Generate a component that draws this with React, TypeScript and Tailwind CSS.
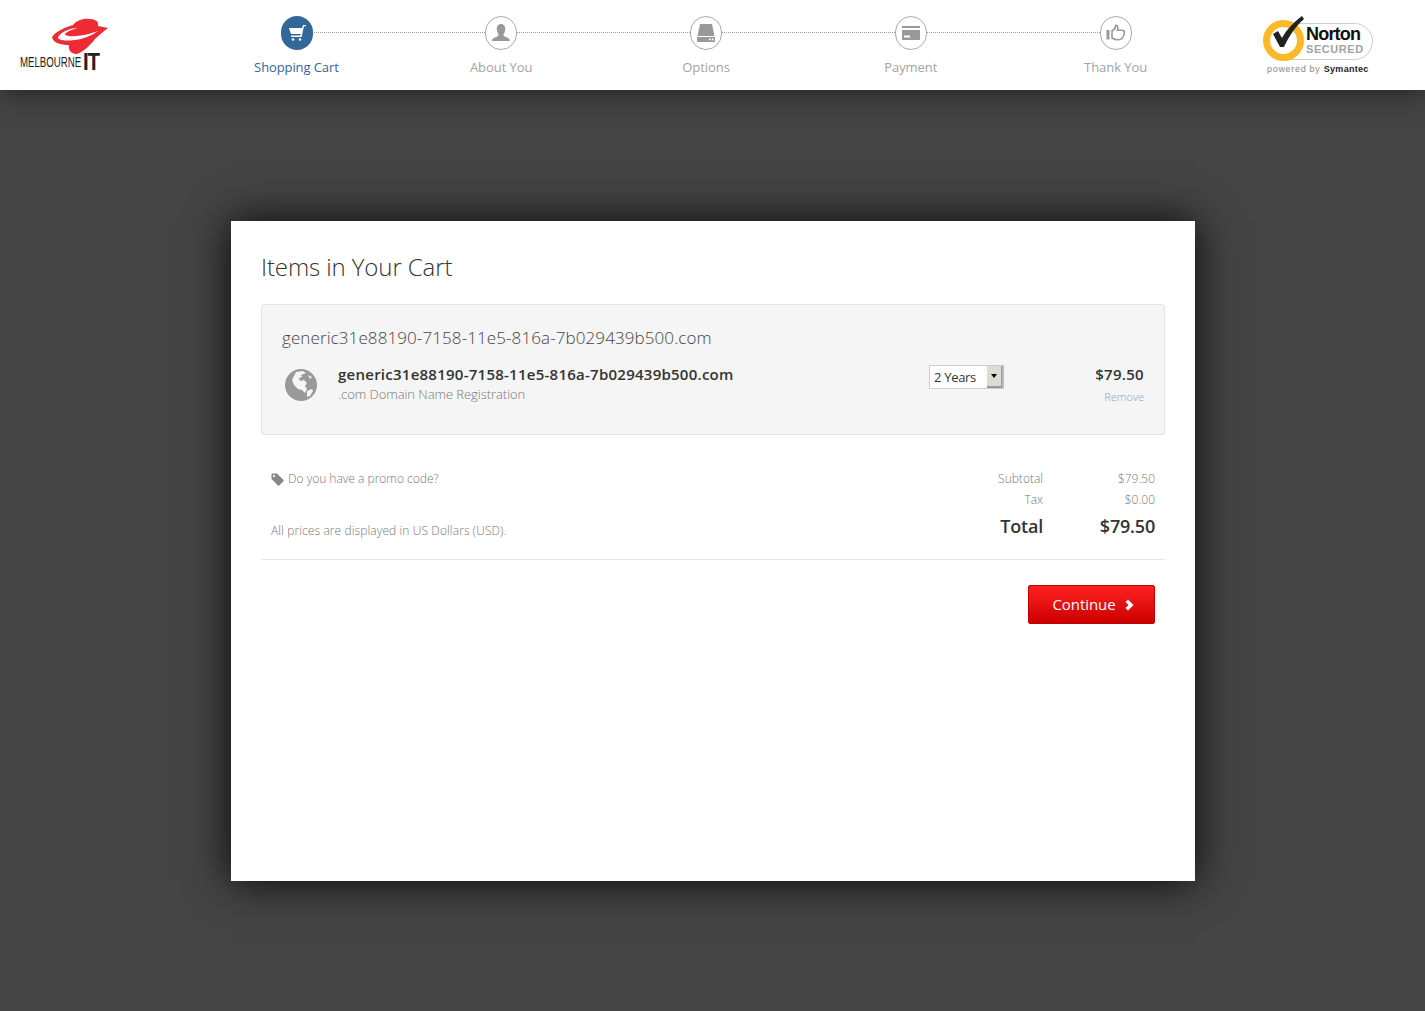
import React from "react";

const Logo = () => (
  <div className="relative w-[100px] h-[60px] ml-[19px] mt-[17px] shrink-0">
    <svg className="absolute left-[32px] top-0" width="60" height="38" viewBox="0 0 60 38">
      <path d="M1 20 C6 13 16 10 22 8 C26 3 33 1 38 2 C44 2 48 4 47 9 L57 11 C52 15 48 18 44 22 C38 30 30 36 26 37 C20 37 17 33 18 28 C10 28 2 26 1 20 Z" fill="#ee2a33" />
      <path d="M7 20 C11 14 20 11 27 11 C20 13 14 15 14 18 C22 21 36 18 47 14 C40 19 32 22 24 23 C15 24 7 24 7 20 Z" fill="#ffffff" />
    </svg>
    <div className="absolute left-[1px] top-[37px] font-['Liberation_Sans',sans-serif] text-[14px] leading-[16px] text-[#222] scale-x-[0.69] origin-left whitespace-nowrap">MELBOURNE</div>
    <div className="absolute left-[64px] top-[33px] font-['Liberation_Sans',sans-serif] font-bold text-[24px] leading-[24px] text-[#222] tracking-[-1.5px] scale-x-[0.85] origin-left">IT</div>
  </div>
);

const Cart = () => (
  <svg width="18" height="18" viewBox="0 0 18 18" fill="#fff">
    <path d="M1 4 H14 L15 1 H18 V2.3 H16 L13.6 13 H3.4 L3 11.6 H12.4 L12.7 10 H3 Z" />
    <circle cx="5" cy="15.5" r="1.3" />
    <circle cx="12" cy="15.5" r="1.3" />
  </svg>
);
const User = () => (
  <svg width="20" height="20" viewBox="0 0 20 20" fill="#999">
    <path d="M10 1 C13 1 14.5 3.5 14.2 6.5 C14 9 13 10.5 12.4 11.5 C12.4 13 14 13.7 16 14.5 C18 15.3 18.8 16 18.8 18 H1 C1 16 2 15.3 4 14.5 C6 13.7 7.6 13 7.6 11.5 C7 10.5 6 9 5.8 6.5 C5.5 3.5 7 1 10 1 Z" />
  </svg>
);
const Drive = () => (
  <svg width="20" height="20" viewBox="0 0 20 20">
    <path d="M4 1 H16 L18.5 13 H1.5 Z" fill="#999" />
    <path d="M1 14 H19 V18 Q19 19 18 19 H2 Q1 19 1 18 Z" fill="#999" />
    <rect x="13" y="15.5" width="1.6" height="1.8" fill="#fff" />
    <rect x="15.8" y="15.5" width="1.6" height="1.8" fill="#fff" />
  </svg>
);
const CardIcon = () => (
  <svg width="18" height="14" viewBox="0 0 18 14" fill="#999">
    <rect x="0" y="0" width="18" height="2" />
    <path d="M0 4 H18 V14 H0 Z M2 9.5 V11.5 H8 V9.5 Z" fillRule="evenodd" />
  </svg>
);
const Thumb = () => (
  <svg width="20" height="20" viewBox="0 0 20 20" fill="none">
    <rect x="0.5" y="7" width="3" height="9.5" fill="#999" />
    <path d="M6 8 C8 7 9.5 5 9.8 2.2 C11.8 2 12.3 4.5 11.3 7.2 H16.5 C18 7.2 18.7 8.5 18.3 10 C17.8 14 15.5 16.7 12 16.7 C9.5 16.7 7.5 16 6 15 Z" stroke="#999" strokeWidth="1.6" />
  </svg>
);

const steps = [
  { label: "Shopping Cart", icon: <Cart />, active: true },
  { label: "About You", icon: <User /> },
  { label: "Options", icon: <Drive /> },
  { label: "Payment", icon: <CardIcon /> },
  { label: "Thank You", icon: <Thumb /> },
];

const Step = ({ s, i }: { s: (typeof steps)[number]; i: number }) => (
  <div className="relative flex flex-col items-center pt-4">
    {i < 4 && <div className="absolute left-1/2 top-[32px] w-full border-t border-dotted border-[#999]" />}
    <div
      className={
        s.active
          ? "relative ml-[1px] w-8 h-[34px] rounded-full bg-[#336699] flex items-center justify-center"
          : "relative w-8 h-[34px] rounded-full bg-white border border-[#aaa] flex items-center justify-center"
      }
    >
      {s.icon}
    </div>
    <div className={s.active ? "mt-2 text-[13px] leading-[18px] tracking-[-0.1px] text-[#336699]" : "mt-2 text-[13px] leading-[18px] tracking-[-0.05px] text-[#a3a3a3]"}>{s.label}</div>
  </div>
);

const Norton = () => (
  <div className="relative w-[114px] h-[64px] mt-[14px] shrink-0 font-['Liberation_Sans',sans-serif]">
    <div className="absolute left-[20px] top-[9px] w-[90px] h-[37px] rounded-r-[19px] border border-[#ccc]" />
    <div className="absolute left-0 top-[6px] w-[41px] h-[41px] rounded-full border-[7px] border-[#fdb827] bg-white" />
    <svg className="absolute left-[6px] top-0" width="40" height="34" viewBox="0 0 40 34">
      <path d="M4 20 L9 17 L13 24 C18 15 25 8 33 2 L35 5 C27 12 20 22 15 33 H11 Z" fill="#222" />
    </svg>
    <div className="absolute left-[43px] top-[10px] font-bold text-[18px] leading-[20px] text-[#111] tracking-[-0.8px]">Norton</div>
    <div className="absolute left-[43px] top-[29px] font-bold text-[11px] leading-[13px] text-[#a3a3a3] tracking-[0.55px]">SECURED</div>
    <div className="absolute left-[4px] top-[50px] text-[9px] leading-[11px] text-[#888] tracking-[0.7px] whitespace-nowrap">powered by <span className="font-bold text-[#222] tracking-[0.3px]">Symantec</span></div>
  </div>
);

const Globe = () => (
  <svg width="32" height="32" viewBox="0 0 32 32">
    <circle cx="16" cy="16" r="16" fill="#999" />
    <path d="M11 3 L18 2 L21 4 L16 6 L17 8 L14 9 L15 12 L19 11 L22 14 L20 17 L22 20 L20 24 L17 21 L13 20 L9 16 L7 11 Z" fill="#f5f5f5" />
    <path d="M22 22 L27 20 L28 22 L25 27 L22 28 Z" fill="#f5f5f5" />
    <path d="M23 6 L27 8 L25 10 Z" fill="#f5f5f5" />
  </svg>
);

const Tag = () => (
  <svg width="13" height="13" viewBox="0 0 13 13" fill="#888">
    <path d="M0.5 1.5 Q0.5 0.5 1.5 0.5 H6 L12.5 7 Q13 7.6 12.5 8.2 L8.2 12.5 Q7.6 13 7 12.5 L0.5 6 Z M3 2 A1.1 1.1 0 1 0 3 4.2 A1.1 1.1 0 1 0 3 2 Z" fillRule="evenodd" />
  </svg>
);

export default function App() {
  return (
    <div className="min-h-[1011px] bg-[#444444] font-['Open_Sans',sans-serif]">
      <header className="relative z-10 h-[90px] bg-white flex shadow-[0_0_30px_rgba(0,0,0,0.6)]">
        <div className="w-[194px] shrink-0">
          <Logo />
        </div>
        <div className="w-[1024px] shrink-0 grid grid-cols-5">
          {steps.map((s, i) => (
            <Step key={s.label} s={s} i={i} />
          ))}
        </div>
        <div className="ml-[45px]">
          <Norton />
        </div>
      </header>

      <main className="w-[964px] h-[660px] mt-[131px] ml-[231px] bg-white px-[30px] shadow-[0_0_40px_rgba(0,0,0,0.9)]">
        <h1 className="pt-[31px] text-[24px] leading-[30px] font-light text-[#333] tracking-[-0.1px]">Items in Your Cart</h1>

        <section className="mt-[22px] h-[131px] bg-[#f5f5f5] border border-[#e3e3e3] rounded-[3px] pl-5 pr-5 pt-[21px]">
          <div className="text-[17px] leading-[24px] font-light text-[#444] tracking-[0.1px]">generic31e88190-7158-11e5-816a-7b029439b500.com</div>
          <div className="flex mt-[14px]">
            <div className="mt-[5px] ml-[3px] shrink-0">
              <Globe />
            </div>
            <div className="ml-[21px] w-[591px] shrink-0">
              <div className="text-[15px] leading-[20px] font-semibold text-[#333] tracking-[0.25px]">generic31e88190-7158-11e5-816a-7b029439b500.com</div>
              <div className="text-[13px] leading-[20px] font-light text-[#777] -tracking-[0.05px]">.com Domain Name Registration</div>
            </div>
            <div className="mt-[1px] w-[75px] h-[24px] flex border border-[#ccc] border-r-2 border-r-[#bbb] bg-white shrink-0">
              <span className="flex-1 pl-[4px] text-[13px] leading-[23px] text-[#333] -tracking-[0.3px]">2 Years</span>
              <span className="w-[15px] bg-[#dcdcd4] border-r border-b-2 border-[#999] flex items-center justify-center">
                <span className="w-0 h-0 border-x-[3.5px] border-x-transparent border-t-[4px] border-t-black" />
              </span>
            </div>
            <div className="flex-1 text-right">
              <div className="text-[15px] leading-[20px] font-semibold text-[#333] tracking-[0.3px]">$79.50</div>
              <div className="mt-[5px] text-[11px] leading-[16px] font-light text-[#7fa6cc]">Remove</div>
            </div>
          </div>
        </section>

        <section className="h-[125px] border-b border-[#e5e5e5] flex justify-between px-[10px] pt-[34px]">
          <div className="text-[12px] font-light text-[#777]">
            <div className="flex items-center h-[20px]">
              <Tag />
              <span className="ml-[4px]">Do you have a promo code?</span>
            </div>
            <div className="mt-[32px] leading-[20px] tracking-[0.1px]">All prices are displayed in US Dollars (USD).</div>
          </div>
          <div className="w-[200px] text-right">
            <div className="flex justify-end h-[21px] text-[12px] leading-[20px] font-light text-[#777]">
              <span>Subtotal</span>
              <span className="w-[112px]">$79.50</span>
            </div>
            <div className="flex justify-end h-[21px] text-[12px] leading-[20px] font-light text-[#777]">
              <span>Tax</span>
              <span className="w-[112px]">$0.00</span>
            </div>
            <div className="flex justify-end -mt-[1px] text-[18px] leading-[32px] font-semibold text-[#333] -tracking-[0.2px]">
              <span>Total</span>
              <span className="w-[112px]">$79.50</span>
            </div>
          </div>
        </section>

        <div className="flex justify-end pr-[10px] mt-[25px]">
          <button className="w-[127px] h-[39px] rounded-[2px] border border-[#c00000] bg-gradient-to-b from-[#ff1f1f] to-[#cc0000] text-white text-[15px] -tracking-[0.05px] flex items-center justify-center pl-[3px]">
            Continue
            <svg className="ml-[9px]" width="9" height="12" viewBox="0 0 9 12" fill="#fff">
              <path d="M3 0.5 L8.5 6 L3 11.5 L0.5 9 L3.5 6 L0.5 3 Z" />
            </svg>
          </button>
        </div>
      </main>
    </div>
  );
}
